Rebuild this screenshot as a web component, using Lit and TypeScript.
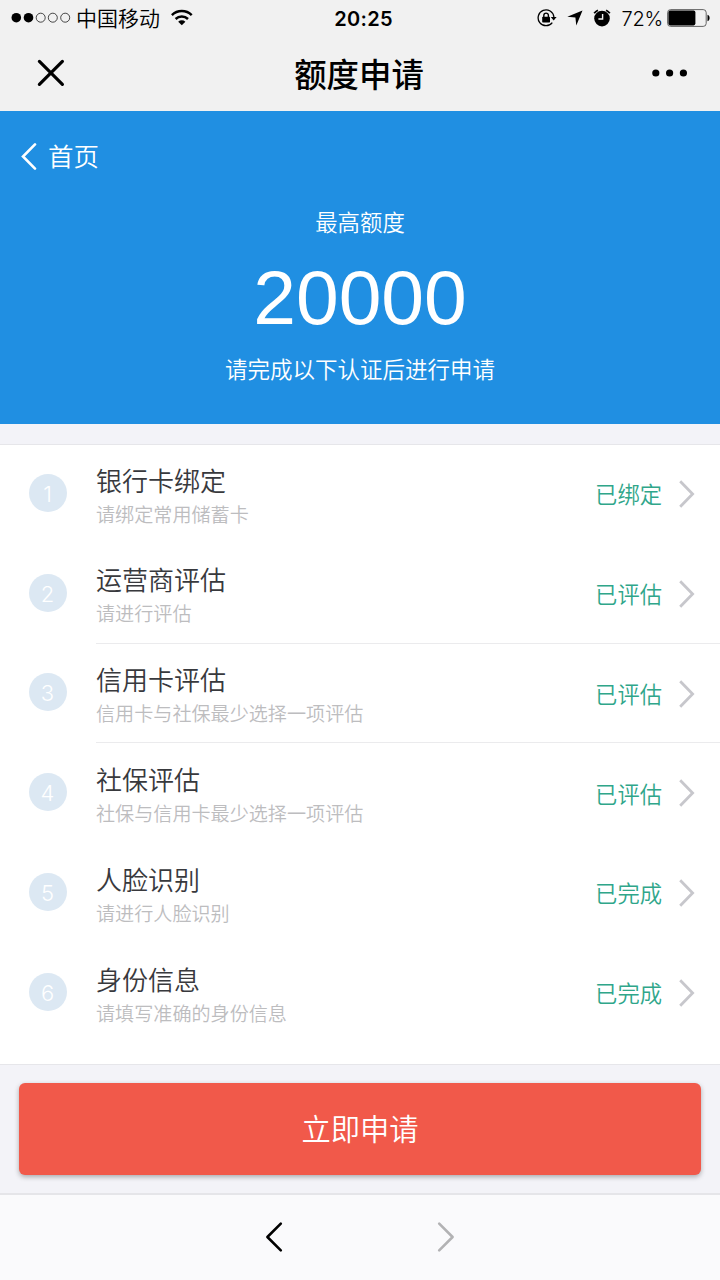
import { LitElement, html, css, svg } from 'lit';
import { customElement, property } from 'lit/decorators.js';

interface Step {
  title: string;
  hint: string;
  status: string;
  divided?: boolean;
}

const STEPS: Step[] = [
  { title: '银行卡绑定', hint: '请绑定常用储蓄卡', status: '已绑定' },
  { title: '运营商评估', hint: '请进行评估', status: '已评估', divided: true },
  { title: '信用卡评估', hint: '信用卡与社保最少选择一项评估', status: '已评估', divided: true },
  { title: '社保评估', hint: '社保与信用卡最少选择一项评估', status: '已评估' },
  { title: '人脸识别', hint: '请进行人脸识别', status: '已完成' },
  { title: '身份信息', hint: '请填写准确的身份信息', status: '已完成' },
];

/**
 * @class StatusBarElement
 *
 * Phone status bar: signal, carrier, clock and battery
 */
@customElement('c-status-bar')
export class StatusBarElement extends LitElement {
  static styles = css`
    :host {
      display: grid;
      grid-template-columns: 1fr auto 1fr;
      align-items: center;
      height: 36px;
      padding: 0 10px 0 11px;
      font-family: Inter, 'Noto Sans CJK SC', sans-serif;
      color: #000;
    }
    svg {
      display: block;
      margin-bottom: 2px;
    }
    .left,
    .right {
      display: flex;
      align-items: center;
    }
    .right {
      justify-content: flex-end;
    }
    .carrier {
      margin: 0 11px 0 5px;
      font-size: 21px;
      line-height: 36px;
      padding-top: 1px;
    }
    .time {
      padding: 1px 0 0 6px;
      font-size: 20px;
      font-weight: 600;
      line-height: 36px;
      letter-spacing: 0.3px;
    }
    .lock {
      margin-right: 10px;
    }
    .arrow {
      margin-right: 10px;
    }
    .percent {
      margin: 0 4px 0 10px;
      padding-top: 1px;
      font-size: 20px;
      line-height: 36px;
      letter-spacing: -0.2px;
    }
  `;

  render() {
    return html`
      <div class="left">
        <svg width="60" height="12" viewBox="0 0 60 12">
          ${[5.3, 17.5, 29.7, 41.8, 54.2].map((x, i) => svg`
            <circle cx=${x} cy="5.7" r=${i < 2 ? 4.8 : 4.5} stroke="#000" stroke-width=${i < 2 ? 0 : 0.7} fill=${i < 2 ? '#000' : 'none'}></circle>
          `)}
        </svg>
        <span class="carrier">中国移动</span>
        <svg width="22" height="17" viewBox="0 0 22 17">
          <g fill="none" stroke="#000" stroke-width="2.5">
            <path d="M.9 6.1a14.3 14.3 0 0 1 19.8 0"></path>
            <path d="M4.6 10a9 9 0 0 1 12.4 0"></path>
          </g>
          <path d="M7.2 12.8a5.2 5.2 0 0 1 7.2 0L10.8 16.3z"></path>
        </svg>
      </div>
      <span class="time">20:25</span>
      <div class="right">
        <svg class="lock" width="20" height="18" viewBox="0 0 20 18">
          <path d="M15.3 13.6A7.9 7.9 0 1 1 16.9 8" fill="none" stroke="#000" stroke-width="1.3"></path>
          <path d="M13.8 8h5.8l-2.9 3.4z"></path>
          <rect x="5.2" y="7.7" width="7.8" height="5.8" rx=".7"></rect>
          <path d="M6.8 8.2V6.4a2.3 2.3 0 0 1 4.6 0v1.8" fill="none" stroke="#000" stroke-width="1.4"></path>
        </svg>
        <svg class="arrow" width="16" height="16" viewBox="0 0 16 16">
          <path d="M15.5.4 9.3 15.6 8.4 7.6.3 6.8z"></path>
        </svg>
        <svg width="18" height="18" viewBox="0 0 18 18">
          <circle cx="9" cy="9.6" r="7.8"></circle>
          <path d="M1.2 4.3A9 9 0 0 1 4.9 1.2M13.1 1.2a9 9 0 0 1 3.7 3.1" fill="none" stroke="#000" stroke-width="1.8"></path>
          <path d="M9.6 5v5H5.4" fill="none" stroke="#f1f1f1" stroke-width="1.4"></path>
        </svg>
        <span class="percent">72%</span>
        <svg width="43" height="18" viewBox="0 0 43 18">
          <rect x=".6" y=".6" width="38.6" height="16.8" rx="3" fill="none" stroke="#555" stroke-width=".9"></rect>
          <rect x="1.4" y="1.6" width="27" height="14.8" rx="1.8"></rect>
          <path d="M40.5 5.8c2.8.5 2.8 5.9 0 6.4z"></path>
        </svg>
      </div>
    `;
  }
}

/**
 * @class StepItemElement
 *
 * One verification step of the application
 */
@customElement('c-step-item')
export class StepItemElement extends LitElement {
  @property({ type: Number }) index = 1;
  @property({ attribute: false }) step!: Step;

  static styles = css`
    :host {
      display: flex;
      height: 99.8px;
      padding-left: 29px;
    }
    .badge {
      flex: none;
      width: 38px;
      height: 38px;
      margin: 28.8px 29px 0 0;
      border-radius: 50%;
      background: #dce8f3;
      color: #fff;
      font: 300 22px/40px Inter, sans-serif;
      text-align: center;
      text-indent: -1px;
    }
    .body {
      flex: 1;
      display: flex;
      justify-content: space-between;
      box-sizing: border-box;
      height: 98.8px;
      padding-right: 25px;
      border-bottom: 1px solid transparent;
    }
    :host([divided]) .body {
      border-bottom-color: #ebebed;
    }
    .title {
      margin-top: 15.6px;
      font-size: 26px;
      line-height: 38px;
      color: #38393d;
    }
    .hint {
      margin-top: 1px;
      font-size: 19.1px;
      line-height: 28px;
      color: #bdbdbf;
    }
    .state {
      display: flex;
      align-items: center;
      height: 98px;
      gap: 17px;
      font-size: 22.3px;
      color: #2fa68a;
    }
    .state span {
      padding-bottom: 1.4px;
    }
  `;

  render() {
    return html`
      <div class="badge">${this.index}</div>
      <div class="body">
        <div>
          <div class="title">${this.step.title}</div>
          <div class="hint">${this.step.hint}</div>
        </div>
        <div class="state">
          <span>${this.step.status}</span>
          <svg width="16" height="28" viewBox="0 0 16 28">
            <path d="M1.2 1.2 13.6 14 1.2 26.8" fill="none" stroke="#c7c7cc" stroke-width="2.8"></path>
          </svg>
        </div>
      </div>
    `;
  }
}

@customElement('app-root')
export class AppRootElement extends LitElement {
  static styles = css`
    :host {
      display: flex;
      flex-direction: column;
      height: 1280px;
      overflow: hidden;
      background: #f3f3f8;
      font-family: 'Noto Sans CJK SC', sans-serif;
      font-weight: 350;
    }
    svg {
      display: block;
    }
    .navbar {
      display: grid;
      grid-template-columns: 1fr auto 1fr;
      align-items: center;
      height: 75px;
      padding: 0 32px 0 37px;
    }
    .top {
      background: #f1f1f1;
    }
    .navbar svg {
      margin-bottom: 1px;
    }
    .navbar h1 {
      margin: 0 7px 2px 0;
      font-size: 32.4px;
      font-weight: 500;
      line-height: 72px;
      color: #000;
    }
    .more {
      justify-self: end;
    }
    .hero {
      box-sizing: border-box;
      height: 313px;
      padding-top: 25px;
      background: #208fe2;
      color: #fff;
      text-align: center;
    }
    .back {
      display: flex;
      align-items: center;
      gap: 11px;
      height: 40px;
      padding-left: 21px;
      font-size: 25.5px;
      line-height: 38px;
    }
    .back span {
      padding-bottom: 2px;
    }
    .label {
      margin-top: 28px;
      font-size: 22.4px;
      line-height: 34px;
    }
    .amount {
      margin-top: 9px;
      font: 76.8px/100px 'Liberation Sans', sans-serif;
    }
    .note {
      margin-top: 4px;
      font-size: 22.5px;
      line-height: 34px;
    }
    .steps {
      box-sizing: border-box;
      height: 621px;
      margin-top: 20px;
      border: solid #e6e6ea;
      border-width: 1px 0;
      background: #fff;
    }
    .submit {
      display: block;
      width: 682px;
      height: 92px;
      margin: 18px auto 0;
      padding: 0 0 5px;
      border: 0;
      border-radius: 6px;
      background: #f1594a;
      box-shadow: 0 2px 5px rgba(0, 0, 0, 0.3);
      color: #fff;
      font-family: inherit;
      font-size: 29.3px;
      font-weight: inherit;
    }
    .toolbar {
      flex: 1;
      display: flex;
      align-items: center;
      justify-content: center;
      gap: 154px;
      margin-top: 18px;
      border-top: 2px solid #e5e5e9;
      background: #fafafc;
    }
    .toolbar svg {
      margin-bottom: 1px;
    }
  `;

  render() {
    return html`
      <div class="top">
        <c-status-bar></c-status-bar>
        <div class="navbar">
          <svg width="28" height="28" viewBox="0 0 28 28">
            <path d="M2.4 2.4 25.4 25.4M25.4 2.4 2.4 25.4" stroke="#000" stroke-width="3.2" stroke-linecap="round"></path>
          </svg>
          <h1>额度申请</h1>
          <svg class="more" width="36" height="8" viewBox="0 0 36 8">
            <circle cx="3.8" cy="4" r="3.6"></circle>
            <circle cx="17.6" cy="4" r="3.6"></circle>
            <circle cx="31.4" cy="4" r="3.6"></circle>
          </svg>
        </div>
      </div>
      <div class="hero">
        <div class="back">
          <svg width="16" height="28" viewBox="0 0 16 28">
            <path d="M14 2.4 2 14.5 14 26.6" fill="none" stroke="#fff" stroke-width="2.6" stroke-linecap="round"></path>
          </svg>
          <span>首页</span>
        </div>
        <div class="label">最高额度</div>
        <div class="amount">20000</div>
        <div class="note">请完成以下认证后进行申请</div>
      </div>
      <div class="steps">
        ${STEPS.map((step, i) => html`
          <c-step-item .index=${i + 1} .step=${step} ?divided=${step.divided}></c-step-item>
        `)}
      </div>
      <button class="submit">立即申请</button>
      <div class="toolbar">
        <svg width="18" height="32" viewBox="0 0 18 32">
          <path d="M15.8 2.6 2.4 16 15.8 29.4" fill="none" stroke="#000" stroke-width="2.6" stroke-linecap="round" stroke-linejoin="round"></path>
        </svg>
        <svg width="18" height="32" viewBox="0 0 18 32">
          <path d="M2.2 2.6 15.6 16 2.2 29.4" fill="none" stroke="#b2b2b4" stroke-width="2.6" stroke-linecap="round" stroke-linejoin="round"></path>
        </svg>
      </div>
    `;
  }
}
